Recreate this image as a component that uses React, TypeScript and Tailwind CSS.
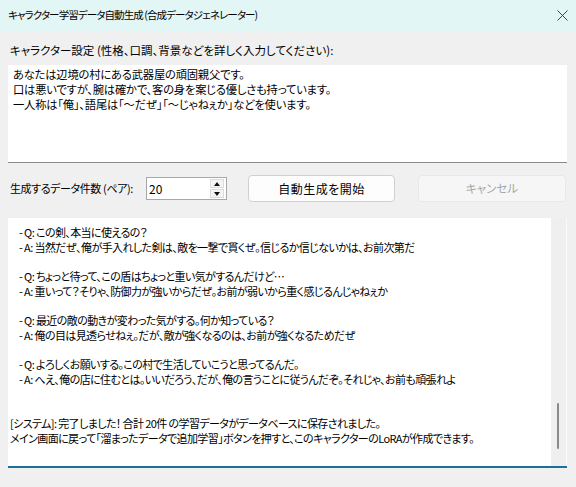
import React from 'react';

const logLines: { text: string; indent?: boolean }[] = [
  { text: '- Q: この剣、本当に使えるの？', indent: true },
  { text: '- A: 当然だぜ、俺が手入れした剣は、敵を一撃で貫くぜ。信じるか信じないかは、お前次第だ', indent: true },
  { text: '' },
  { text: '- Q: ちょっと待って、この盾はちょっと重い気がするんだけど…', indent: true },
  { text: '- A: 重いって？そりゃ、防御力が強いからだぜ。お前が弱いから重く感じるんじゃねぇか', indent: true },
  { text: '' },
  { text: '- Q: 最近の敵の動きが変わった気がする。何か知っている？', indent: true },
  { text: '- A: 俺の目は見透らせねぇ。だが、敵が強くなるのは、お前が強くなるためだぜ', indent: true },
  { text: '' },
  { text: '- Q: よろしくお願いする。この村で生活していこうと思ってるんだ。', indent: true },
  { text: '- A: へえ、俺の店に住むとは。いいだろう、だが、俺の言うことに従うんだぞ。それじゃ、お前も頑張れよ', indent: true },
  { text: '' },
  { text: '' },
  { text: '[システム]: 完了しました！ 合計 20件 の学習データがデータベースに保存されました。' },
  { text: 'メイン画面に戻って「溜まったデータで追加学習」ボタンを押すと、このキャラクターのLoRAが作成できます。' },
];

export default function App() {
  return (
    <div className="w-[576px] h-[487px] bg-[#f0f0f0] text-[12px] text-black font-['Noto_Sans_CJK_JP','Noto_Sans',sans-serif] [font-feature-settings:'palt'] overflow-hidden">
      {/* Title bar */}
      <div className="h-[31px] bg-[#e2f6f6] flex items-center justify-between pl-[8px] pr-[8px]">
        <span className="leading-none text-[10.5px] tracking-[-0.9px]">キャラクター学習データ自動生成 (合成データジェネレーター)</span>
        <svg width="11" height="11" viewBox="0 0 11 11" className="text-[#333]">
          <path d="M0.5 0.5 L10.5 10.5 M10.5 0.5 L0.5 10.5" stroke="currentColor" strokeWidth="0.9" />
        </svg>
      </div>

      <div className="px-[8px] flex flex-col">
        {/* Character settings */}
        <div className="mt-[12px] pl-[2px] leading-[15px] h-[15px] text-[11.5px] whitespace-nowrap">
          キャラクター設定 (性格、口調、背景などを詳しく入力してください):
        </div>
        <div className="mt-[7px] h-[98px] w-[559px] bg-white border-b border-[#8a8a8a] pl-[5px] pt-[2px] leading-[15px] text-[11.3px] tracking-[-0.2px]">
          <div>あなたは辺境の村にある武器屋の頑固親父です。</div>
          <div>口は悪いですが、腕は確かで、客の身を案じる優しさも持っています。</div>
          <div>一人称は「俺」、語尾は「～だぜ」「～じゃねぇか」などを使います。</div>
        </div>

        {/* Controls row */}
        <div className="mt-[12px] h-[27px] flex items-center">
          <span className="pl-[2px] w-[138px] whitespace-nowrap text-[11px] tracking-[-0.4px]">生成するデータ件数 (ペア):</span>
          <div className="w-[81px] h-[23px] bg-white border border-[#a8a8a8] flex items-center justify-between pl-[2px] pr-[2px]">
            <span>20</span>
            <div className="flex flex-col gap-[1px]">
              <div className="w-[14px] h-[9px] bg-[#f4f4f4] border border-[#dcdcdc] flex items-center justify-center">
                <svg width="6" height="4" viewBox="0 0 6 4"><path d="M0 4 L3 0 L6 4 Z" fill="#111" /></svg>
              </div>
              <div className="w-[14px] h-[9px] bg-[#f4f4f4] border border-[#dcdcdc] flex items-center justify-center">
                <svg width="6" height="4" viewBox="0 0 6 4"><path d="M0 0 L3 4 L6 0 Z" fill="#111" /></svg>
              </div>
            </div>
          </div>
          <button className="ml-[21px] w-[147px] h-[27px] bg-[#fdfdfd] border border-[#d0d0d0] rounded-[4px] tracking-[0.5px]">
            自動生成を開始
          </button>
          <button className="ml-[23px] w-[148px] h-[27px] bg-[#f6f6f6] border border-[#e8e8e8] rounded-[4px] text-[#a6a6a6] text-[11.5px]">
            キャンセル
          </button>
        </div>

        {/* Log */}
        <div className="mt-[16px] h-[250px] w-[559px] bg-white border-b-2 border-[#1c6e9c] flex">
          <div className="flex-1 pt-[7px] pl-[2px] leading-[14.7px] whitespace-pre text-[11px] tracking-[-0.6px]">
            {logLines.map((l, i) => (
              <div key={i} className={`h-[14.7px] ${l.indent ? 'pl-[9px]' : ''}`}>
                {l.text}
              </div>
            ))}
          </div>
          <div className="w-[16px] bg-[#efefef] border-r border-[#fafafa] relative">
            <div className="absolute left-[6px] top-[185px] w-[2px] h-[46px] bg-[#8a8a8a] rounded-full" />
          </div>
        </div>
      </div>
    </div>
  );
}
